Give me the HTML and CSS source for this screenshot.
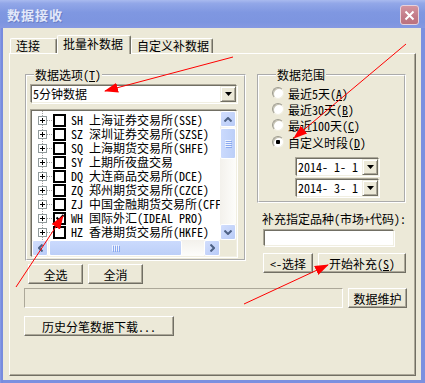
FILE: index.html
```html
<!DOCTYPE html>
<html lang="zh-CN">
<head>
    <meta charset="UTF-8">
    <title>数据接收</title>
    <link rel="stylesheet" href="styles.css">
</head>
<body>
<div class="window">
    <div class="titlebar">
        <span class="title">数据接收</span>
        <span class="close">
            <svg width="11" height="11" viewBox="0 0 11 11"><path d="M1.5 1.5L9.5 9.5M9.5 1.5L1.5 9.5" stroke="#fff" stroke-width="2"/></svg>
        </span>
    </div>

    <div class="client">
        <div class="tabs">
            <div class="tab tab-connect">连接</div>
            <div class="tab tab-batch tab-active">批量补数据</div>
            <div class="tab tab-custom">自定义补数据</div>
        </div>

        <div class="panel">
            <div class="main">
                <div class="left-col">
                    <fieldset class="group group-data">
                        <legend>数据选项(<u>T</u>)</legend>
                        <div class="combo combo-period">
                            <span class="combo-text">5分钟数据</span>
                            <span class="combo-btn"><svg width="7" height="4"><path d="M0 0H7L3.5 4Z"/></svg></span>
                        </div>
                        <div class="tree">
                            <div class="tree-rows">
                                <div class="tree-row"><span class="expander"></span><span class="branch"></span><span class="check"></span><span class="label">SH 上海证券交易所(SSE)</span></div>
                                <div class="tree-row"><span class="expander"></span><span class="branch"></span><span class="check"></span><span class="label">SZ 深圳证券交易所(SZSE)</span></div>
                                <div class="tree-row"><span class="expander"></span><span class="branch"></span><span class="check"></span><span class="label">SQ 上海期货交易所(SHFE)</span></div>
                                <div class="tree-row"><span class="expander"></span><span class="branch"></span><span class="check"></span><span class="label">SY 上期所夜盘交易</span></div>
                                <div class="tree-row"><span class="expander"></span><span class="branch"></span><span class="check"></span><span class="label">DQ 大连商品交易所(DCE)</span></div>
                                <div class="tree-row"><span class="expander"></span><span class="branch"></span><span class="check"></span><span class="label">ZQ 郑州期货交易所(CZCE)</span></div>
                                <div class="tree-row"><span class="expander"></span><span class="branch"></span><span class="check"></span><span class="label">ZJ 中国金融期货交易所(CFFEX)</span></div>
                                <div class="tree-row"><span class="expander"></span><span class="branch"></span><span class="check checked"><svg width="8" height="8" viewBox="0 0 8 8"><path d="M0.5 3.5L3 6L7.5 1" stroke="#000" stroke-width="2" fill="none"/></svg></span><span class="label">WH 国际外汇(IDEAL PRO)</span></div>
                                <div class="tree-row"><span class="expander"></span><span class="branch"></span><span class="check"></span><span class="label">HZ 香港期货交易所(HKFE)</span></div>
                                <div class="tree-row"><span class="expander"></span><span class="branch"></span><span class="check"></span><span class="label">SG 新加坡交易所(SGX)</span></div>
                            </div>
                            <div class="vscroll">
                                <span class="sb-btn"><svg width="8" height="5"><path d="M0.5 4.5L4 1L7.5 4.5" stroke="#4d6185" stroke-width="2" fill="none"/></svg></span>
                                <div class="sb-track sb-track-v"><span class="sb-thumb sb-thumb-v"><i></i><i></i><i></i><i></i></span></div>
                                <span class="sb-btn"><svg width="8" height="5"><path d="M0.5 0.5L4 4L7.5 0.5" stroke="#4d6185" stroke-width="2" fill="none"/></svg></span>
                            </div>
                            <div class="hscroll">
                                <span class="sb-btn"><svg width="5" height="8"><path d="M4.5 0.5L1 4L4.5 7.5" stroke="#4d6185" stroke-width="2" fill="none"/></svg></span>
                                <div class="sb-track sb-track-h"><span class="sb-thumb sb-thumb-h"><i></i><i></i><i></i><i></i></span></div>
                                <span class="sb-btn"><svg width="5" height="8"><path d="M0.5 0.5L4 4L0.5 7.5" stroke="#4d6185" stroke-width="2" fill="none"/></svg></span>
                            </div>
                            <div class="sb-corner"></div>
                        </div>
                    </fieldset>
                    <div class="btn-row btn-row-left">
                        <button class="btn btn-all">全选</button>
                        <button class="btn btn-none">全消</button>
                    </div>
                </div>

                <div class="right-col">
                    <fieldset class="group group-range">
                        <legend>数据范围</legend>
                        <div class="radio-row"><span class="radio"></span><span>最近5天(<u>A</u>)</span></div>
                        <div class="radio-row"><span class="radio"></span><span>最近30天(<u>B</u>)</span></div>
                        <div class="radio-row"><span class="radio"></span><span>最近100天(<u>C</u>)</span></div>
                        <div class="radio-row radio-last"><span class="radio radio-on"></span><span>自定义时段(<u>D</u>)</span></div>
                        <div class="combo combo-date combo-date-first">
                            <span class="combo-text">2014- 1- 1</span>
                            <span class="combo-btn"><svg width="7" height="4"><path d="M0 0H7L3.5 4Z"/></svg></span>
                        </div>
                        <div class="combo combo-date">
                            <span class="combo-text">2014- 3- 1</span>
                            <span class="combo-btn"><svg width="7" height="4"><path d="M0 0H7L3.5 4Z"/></svg></span>
                        </div>
                    </fieldset>
                    <div class="code-label">补充指定品种(市场+代码):</div>
                    <div class="textbox"></div>
                    <div class="btn-row btn-row-right">
                        <button class="btn btn-pick">&lt;-选择</button>
                        <button class="btn btn-start">开始补充(<u>S</u>)</button>
                    </div>
                </div>
            </div>

            <div class="status-row">
                <div class="status-field"></div>
                <button class="btn btn-maint">数据维护</button>
            </div>
            <div class="history-row">
                <button class="btn btn-history">历史分笔数据下载...</button>
            </div>
        </div>
    </div>

    <svg class="marks" width="425" height="383" viewBox="0 0 425 383">
        <defs>
            <marker id="head" markerWidth="14" markerHeight="10" refX="13" refY="5" orient="auto" markerUnits="userSpaceOnUse">
                <path d="M0 0L14 5L0 10Z" fill="#ff0000"/>
            </marker>
        </defs>
        <g stroke="#ff0000" stroke-width="1" fill="none">
            <line x1="233" y1="57" x2="105" y2="91" marker-end="url(#head)"/>
            <line x1="406" y1="44" x2="294" y2="138" marker-end="url(#head)"/>
            <line x1="16" y1="287" x2="63" y2="216" marker-end="url(#head)"/>
            <line x1="244" y1="304" x2="328" y2="265" marker-end="url(#head)"/>
        </g>
    </svg>
</div>
</body>
</html>
```

FILE: styles.css
```css
body {
    margin: 0;
    background: #7b90e0;
    font-family: "Noto Sans Mono CJK SC", "Liberation Mono", "Noto Sans CJK SC", monospace;
    font-size: 12px;
    color: #000;
}
.window {
    position: relative;
    width: 425px;
    height: 383px;
    display: flex;
    flex-direction: column;
    background: linear-gradient(to right, #8a9ee6, #7286dc 2px, #7b90e0 3px);
}
.titlebar {
    height: 28px;
    flex: none;
    display: flex;
    align-items: center;
    justify-content: space-between;
    padding: 0 6px 0 7px;
    background: linear-gradient(to bottom, #a9baef 0%, #92a7e8 12%, #7f97e1 45%, #7d95e0 80%, #8699e2 100%);
}
.title {
    font-family: "Noto Sans CJK SC", sans-serif;
    font-weight: bold;
    font-size: 13px;
    color: #e2e8fa;
    text-shadow: 1px 1px 0 #6a7ec6;
    letter-spacing: 1px;
}
.close {
    width: 19px;
    height: 20px;
    margin-top: 2px;
    box-sizing: border-box;
    border: 1px solid #e6d2dc;
    border-radius: 3px;
    background: linear-gradient(to bottom, #d3949f, #c27a87 60%, #bb727f);
    display: flex;
    align-items: center;
    justify-content: center;
}
.client {
    flex: 1;
    margin: 0 4px 3px 3px;
    padding: 7px 5px 4px 6px;
    background: #ece9d8;
    display: flex;
    flex-direction: column;
}

/* tabs */
.tabs {
    display: flex;
    align-items: flex-end;
    margin-left: 1px;
    height: 18px;
}
.tab {
    height: 15px;
    box-sizing: border-box;
    padding-left: 5px;
    line-height: 13px;
    background: #ece9d8;
    border-top: 1px solid #fff;
    border-left: 1px solid #fff;
    border-right: 1px solid #716f64;
    box-shadow: inset -1px 0 0 #aca899;
    border-radius: 2px 2px 0 0;
    white-space: nowrap;
}
.tab-connect { width: 47px; }
.tab-batch { width: 74px; }
.tab-custom { width: 82px; }
.tab-active {
    height: 19px;
    margin-bottom: -1px;
    line-height: 15px;
    position: relative;
    z-index: 1;
}

/* panel */
.panel {
    flex: 1;
    padding-left: 14px;
    border-top: 1px solid #fff;
    border-left: 1px solid #fff;
    border-right: 1px solid #716f64;
    border-bottom: 1px solid #716f64;
    box-shadow: inset -1px -1px 0 #aca899;
}
.main {
    display: flex;
    margin-top: 14px;
}
.left-col {
    width: 221px;
    margin-left: 1px;
}
.right-col {
    width: 150px;
    margin-left: 11px;
}
.group {
    margin: 0;
    box-sizing: border-box;
    border: 2px groove #fff;
    min-width: 0;
}
.group legend {
    padding: 0 1px;
    margin-left: 4px;
    line-height: 13px;
}
.group-data {
    width: 221px;
    padding: 3px 0 1px 3px;
}
.group-range {
    width: 149px;
    padding: 4px 0 3px 13px;
}

/* sunken fields */
.combo,
.tree,
.textbox {
    box-sizing: border-box;
    background: #fff;
    border: 1px solid;
    border-color: #716f64 #f1efe2 #f1efe2 #716f64;
    box-shadow: -1px -1px 0 #aca899, 1px 1px 0 #fff;
}
.combo {
    display: flex;
    align-items: center;
    height: 18px;
}
.combo-text {
    flex: 1;
    padding-left: 1px;
    line-height: 16px;
    white-space: pre;
}
.combo-btn {
    width: 16px;
    height: 16px;
    box-sizing: border-box;
    background: #ece9d8;
    border: 1px solid;
    border-color: #f1efe2 #716f64 #716f64 #f1efe2;
    box-shadow: inset 1px 1px 0 #fff, inset -1px -1px 0 #aca899;
    display: flex;
    align-items: center;
    justify-content: center;
}
.combo-period {
    width: 206px;
    margin: 1px;
}
.combo-date {
    width: 83px;
    margin: 3px 0 1px 24px;
}
.combo-date-first {
    margin-top: 8px;
}

/* tree list */
.tree {
    width: 206px;
    height: 147px;
    margin: 7px 1px 1px;
    display: grid;
    grid-template-columns: 1fr 16px;
    grid-template-rows: 1fr 16px;
}
.tree-rows {
    overflow: hidden;
    padding-top: 2px;
    background: repeating-linear-gradient(to bottom, #a0a0a0 0 1px, transparent 1px 2px) 10px 0 / 1px 100% no-repeat;
}
.tree-row {
    display: flex;
    align-items: center;
    height: 14px;
    padding-left: 6px;
    white-space: pre;
}
.expander {
    flex: none;
    width: 9px;
    height: 9px;
    box-sizing: border-box;
    border: 1px solid #919b9c;
    background:
        linear-gradient(#000, #000) center / 5px 1px no-repeat,
        linear-gradient(#000, #000) center / 1px 5px no-repeat,
        #fff;
}
.branch {
    flex: none;
    width: 5px;
    height: 1px;
    background: repeating-linear-gradient(to right, #a0a0a0 0 1px, transparent 1px 2px);
}
.check {
    flex: none;
    width: 13px;
    height: 13px;
    box-sizing: border-box;
    margin: 0 5px 0 1px;
    border: 2px solid #000;
    background: #fff;
    display: flex;
    align-items: center;
    justify-content: center;
}
.label {
    line-height: 14px;
}

/* xp scrollbars */
.vscroll,
.hscroll {
    display: flex;
    background: #f4f3ee;
}
.vscroll {
    flex-direction: column;
}
.sb-btn {
    flex: none;
    width: 16px;
    height: 16px;
    box-sizing: border-box;
    border: 1px solid #fff;
    border-radius: 2px;
    background: linear-gradient(to bottom right, #d2defd, #b8cbf7);
    display: flex;
    align-items: center;
    justify-content: center;
}
.sb-track {
    flex: 1;
    display: flex;
    background: linear-gradient(to right, #f3f1ec, #fdfdfb);
}
.sb-track-v {
    flex-direction: column;
    padding-top: 1px;
}
.sb-track-h {
    padding-left: 1px;
    background: linear-gradient(to bottom, #f3f1ec, #fdfdfb);
}
.sb-thumb {
    box-sizing: border-box;
    border: 1px solid #fff;
    border-radius: 2px;
    background: linear-gradient(to right, #cbdafd, #bccff8);
    display: flex;
    align-items: center;
    justify-content: center;
    gap: 1px;
}
.sb-thumb i {
    display: block;
    background: #eef3fe;
    box-shadow: 1px 1px 0 #8aa8ef;
}
.sb-thumb-v {
    height: 31px;
    flex-direction: column;
}
.sb-thumb-v i {
    width: 6px;
    height: 1px;
}
.sb-thumb-h {
    width: 133px;
    background: linear-gradient(to bottom, #cbdafd, #bccff8);
}
.sb-thumb-h i {
    width: 1px;
    height: 6px;
}
.sb-corner {
    background: #ece9d8;
}

/* radios */
.radio-row {
    display: flex;
    align-items: center;
    gap: 4px;
    height: 16px;
    white-space: nowrap;
}
.radio-last {
    margin-top: 1px;
}
.radio {
    flex: none;
    width: 12px;
    height: 12px;
    box-sizing: border-box;
    border-radius: 50%;
    border: 1px solid;
    border-color: #9d9b8f #f1efe2 #f1efe2 #9d9b8f;
    box-shadow: inset 1px 1px 0 #c5c2b2;
    background: #fff;
}
.radio-on {
    background: radial-gradient(circle, #000 0 2px, #fff 2.5px);
}

/* right column bits */
.code-label {
    margin-top: 9px;
    padding-left: 5px;
    line-height: 13px;
    white-space: nowrap;
}
.textbox {
    width: 130px;
    height: 16px;
    margin: 5px 0 0 7px;
}

/* buttons */
.btn {
    box-sizing: border-box;
    height: 20px;
    padding: 0;
    font: inherit;
    color: #000;
    background: #ece9d8;
    border: 1px solid;
    border-color: #fff #716f64 #716f64 #fff;
    box-shadow: inset -1px -1px 0 #aca899;
    white-space: nowrap;
}
.btn-row {
    display: flex;
    gap: 5px;
}
.btn-row-left {
    margin: 3px 0 0 3px;
}
.btn-all,
.btn-none {
    width: 55px;
}
.btn-row-right {
    margin: 7px 0 0 6px;
}
.btn-pick { width: 50px; }
.btn-start { width: 88px; }

.status-row {
    display: flex;
    gap: 5px;
    margin-top: 4px;
}
.status-field {
    width: 319px;
    height: 20px;
    box-sizing: border-box;
    border: 1px solid;
    border-color: #aca899 #fff #fff #aca899;
}
.btn-maint { width: 59px; }
.history-row {
    margin-top: 8px;
}
.btn-history { width: 150px; }

/* red annotation arrows drawn over the dialog */
.marks {
    position: absolute;
    top: 0;
    left: 0;
    pointer-events: none;
}
```
